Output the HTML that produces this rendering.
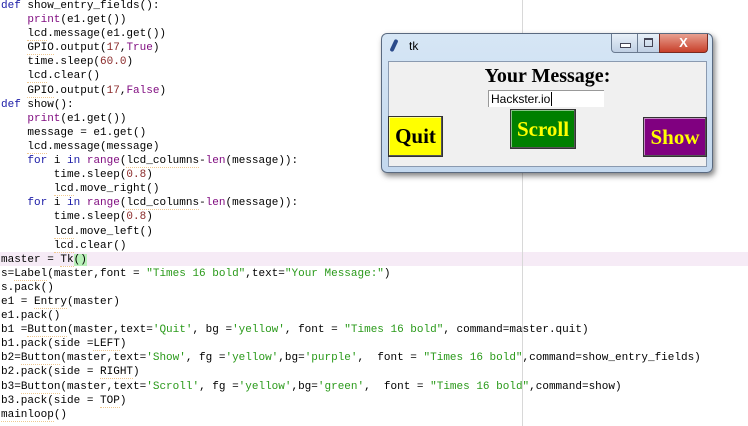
<!DOCTYPE html>
<html><head><meta charset="utf-8"><style>
body{margin:0;width:748px;height:426px;overflow:hidden;background:#fff;position:relative;font-family:"Liberation Mono",monospace}
#code{position:absolute;left:1px;top:-1px;font-size:11px;line-height:14.1px;white-space:pre;color:#000}
.k{color:#1a1aa6}.p{color:#7f0a7f}.n{color:#8a2a2a}.s{color:#2a9a1a}.u{border-bottom:1px dotted #f0c890}
#hl{position:absolute;left:0;top:252px;width:748px;height:14px;background:#f6ebf6}
#vl{position:absolute;left:522px;top:0;width:1px;height:426px;background:#d8d8d8}
#win{position:absolute;left:381px;top:33px;width:330px;height:138px;border-radius:6px;background:linear-gradient(#d6e6f5,#c3d8ee);border:1px solid #5a6a80;box-shadow:2px 3px 6px rgba(0,0,0,.5);font-family:"Liberation Serif",serif}
#client{position:absolute;left:6px;top:27px;width:317px;height:104px;background:#f0f0f0;border:1px solid #8a9ab0}
.b{position:absolute;font-weight:bold;font-size:21px;display:flex;align-items:center;justify-content:center;border:1px solid #333;box-shadow:inset -1px -1px #555,inset 1px 1px #fff8}
</style></head><body>
<div id="hl"></div><div id="vl"></div>
<div id="code"><span class="k">def</span> show_entry_fields():
    <span class="p">print</span>(e1.get())
    <span class="u">lcd</span>.message(e1.get())
    <span class="u">GPIO</span>.output(<span class="n">17</span>,<span class="p">True</span>)
    time.sleep(<span class="n">60.0</span>)
    <span class="u">lcd</span>.clear()
    <span class="u">GPIO</span>.output(<span class="n">17</span>,<span class="p">False</span>)
<span class="k">def</span> show():
    <span class="p">print</span>(e1.get())
    message = e1.get()
    <span class="u">lcd</span>.message(message)
    <span class="k">for</span> i <span class="k">in</span> <span class="p">range</span>(<span class="u">lcd_columns</span>-<span class="p">len</span>(message)):
        time.sleep(<span class="n">0.8</span>)
        <span class="u">lcd</span>.move_right()
    <span class="k">for</span> i <span class="k">in</span> <span class="p">range</span>(<span class="u">lcd_columns</span>-<span class="p">len</span>(message)):
        time.sleep(<span class="n">0.8</span>)
        <span class="u">lcd</span>.move_left()
        <span class="u">lcd</span>.clear()
master = <span class="u">Tk</span><span style="background:#b8f0b8">()</span>
s=<span class="u">Label</span>(master,font = <span class="s">"Times 16 bold"</span>,text=<span class="s">"Your Message:"</span>)
s.pack()
e1 = <span class="u">Entry</span>(master)
e1.pack()
b1 =<span class="u">Button</span>(master,text=<span class="s">'Quit'</span>, bg =<span class="s">'yellow'</span>, font = <span class="s">"Times 16 bold"</span>, command=master.quit)
b1.pack(side =<span class="u">LEFT</span>)
b2=<span class="u">Button</span>(master,text=<span class="s">'Show'</span>, fg =<span class="s">'yellow'</span>,bg=<span class="s">'purple'</span>,  font = <span class="s">"Times 16 bold"</span>,command=show_entry_fields)
b2.pack(side = <span class="u">RIGHT</span>)
b3=<span class="u">Button</span>(master,text=<span class="s">'Scroll'</span>, fg =<span class="s">'yellow'</span>,bg=<span class="s">'green'</span>,  font = <span class="s">"Times 16 bold"</span>,command=show)
b3.pack(side = <span class="u">TOP</span>)
<span class="u">mainloop</span>()</div>
<div id="win">
 <div style="position:absolute;left:10px;top:5px;width:4px;height:13px;background:#2a4a8a;border-radius:3px;transform:rotate(25deg)"></div>
 <div style="position:absolute;left:27px;top:5px;font:12px 'Liberation Sans',sans-serif;color:#000">tk</div>
 <div style="position:absolute;left:229px;top:0;width:25px;height:18px;border:1px solid #6a7a90;border-top:none;border-radius:0 0 0 4px;background:linear-gradient(#e8f0f8,#c0d0e4)"><div style="position:absolute;left:8px;top:9px;width:9px;height:3px;border:1px solid #445;background:#fff"></div></div>
 <div style="position:absolute;left:255px;top:0;width:21px;height:18px;border:1px solid #6a7a90;border-top:none;background:linear-gradient(#e8f0f8,#c0d0e4)"><div style="position:absolute;left:6px;top:4px;width:7px;height:6px;border:1px solid #445;border-top-width:2px"></div></div>
 <div style="position:absolute;left:277px;top:0;width:47px;height:18px;border:1px solid #7a2a20;border-top:none;border-radius:0 0 4px 0;background:linear-gradient(#e8a090,#c8402a);color:#fff;font:bold 13px 'Liberation Sans',sans-serif;text-align:center;line-height:17px">X</div>
 <div id="client">
  <div style="position:absolute;left:0;width:317px;top:3px;text-align:center;font-weight:bold;font-size:20px">Your Message:</div>
  <div style="position:absolute;left:99px;top:28px;width:116px;height:17px;background:#fff;border-top:1px solid #999;border-left:1px solid #999;font:12px 'Liberation Sans',sans-serif;line-height:17px;padding-left:2px;box-sizing:border-box">Hackster.io<span style="border-left:1px solid #000;margin-left:1px"></span></div>
  <div class="b" style="left:-1px;top:54px;width:53px;height:39px;background:#ffff00;color:#000">Quit</div>
  <div class="b" style="left:121px;top:47px;width:64px;height:38px;background:#008000;color:#ffff00">Scroll</div>
  <div class="b" style="left:254px;top:55px;width:62px;height:38px;background:#800080;color:#ffff00">Show</div>
 </div>
</div>
</body></html>
